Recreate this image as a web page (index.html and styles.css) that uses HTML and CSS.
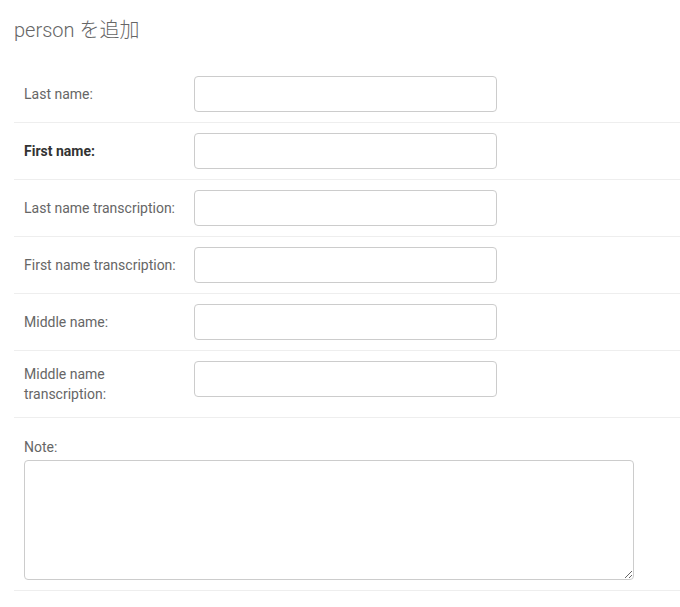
FILE: index.html
```html
<!DOCTYPE html>
<html lang="ja">
<head>
<meta charset="utf-8">
<link rel="stylesheet" href="styles.css">
<title>person を追加</title>
</head>
<body>
<div class="content">
  <h1 class="title">person を追加</h1>
  <form class="form">
    <div class="row">
      <label class="label">Last name:</label>
      <input class="input" type="text">
    </div>
    <div class="row">
      <label class="label required">First name:</label>
      <input class="input" type="text">
    </div>
    <div class="row">
      <label class="label">Last name transcription:</label>
      <input class="input" type="text">
    </div>
    <div class="row">
      <label class="label">First name transcription:</label>
      <input class="input" type="text">
    </div>
    <div class="row">
      <label class="label">Middle name:</label>
      <input class="input" type="text">
    </div>
    <div class="row">
      <label class="label">Middle name transcription:</label>
      <input class="input" type="text">
    </div>
    <div class="row stacked">
      <label class="label">Note:</label>
      <textarea class="textarea"></textarea>
    </div>
  </form>
</div>
</body>
</html>
```
FILE: styles.css
```css
html, body {
  margin: 0;
  padding: 0;
  background: #fff;
}
body {
  font-family: Roboto, "Noto Sans CJK JP", sans-serif;
  font-size: 14px;
  color: #333;
}
.content {
  padding: 18px 0 0 14px;
}
.title {
  margin: 0 0 24px 0;
  font-size: 20px;
  line-height: 24px;
  font-weight: 300;
  color: #666;
}
.form {
  margin: 0;
}
.row {
  display: flex;
  align-items: center;
  padding: 10px 10px;
  border-bottom: 1px solid #eee;
}
.label {
  width: 160px;
  padding: 3px 10px 3px 0;
  line-height: 20px;
  color: #666;
  flex: none;
}
.label.required {
  font-weight: 700;
  color: #333;
}
.input {
  box-sizing: border-box;
  align-self: flex-start;
  width: 303px;
  height: 36px;
  margin: 0;
  padding: 5px 6px;
  border: 1px solid #ccc;
  border-radius: 4px;
  background: #fff;
  font: inherit;
}
.stacked {
  flex-direction: column;
  align-items: flex-start;
}
.stacked .label {
  width: auto;
  padding: 9px 0 0 0;
}
.textarea {
  box-sizing: border-box;
  width: 610px;
  height: 120px;
  margin: 3px 0 0 0;
  padding: 5px 6px;
  border: 1px solid #ccc;
  border-radius: 4px;
  background: #fff;
  font: inherit;
  display: block;
}
```
